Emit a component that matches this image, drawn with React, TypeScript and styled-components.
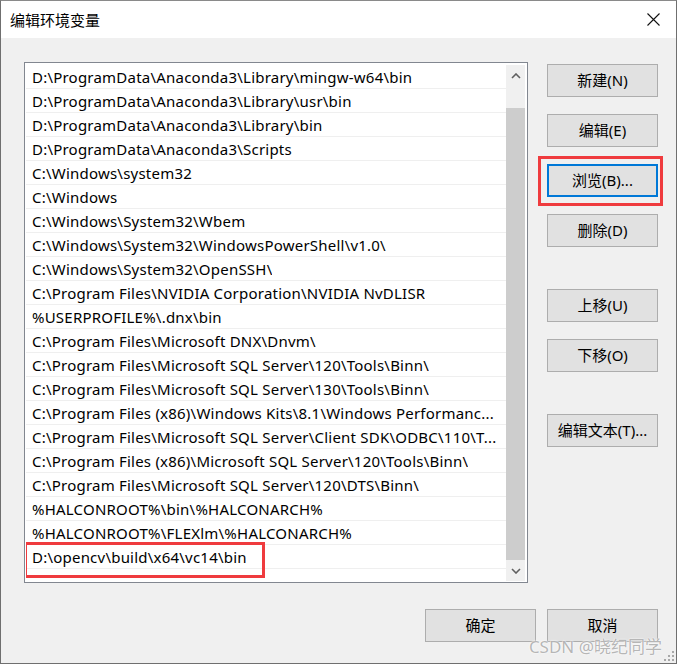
import React from 'react';
import styled, { createGlobalStyle } from 'styled-components';

const GlobalStyle = createGlobalStyle`
  html, body { margin: 0; padding: 0; background: #ffffff; }
  body { font-family: "Noto Sans", "Noto Sans CJK SC", sans-serif; }
`;

const FONT = `"Noto Sans", "Noto Sans CJK SC", sans-serif`;

const Window = styled.div`
  position: relative;
  width: 677px;
  height: 664px;
  box-sizing: border-box;
  border: 1px solid #6f6f6f;
  border-top-color: #8a8a8a;
  background: #f0f0f0;
  display: flex;
  flex-direction: column;
  font-family: ${FONT};
  font-size: 15px;
  color: #000;
  overflow: hidden;
`;

const TitleBar = styled.div`
  height: 37px;
  background: #ffffff;
  display: flex;
  align-items: center;
  justify-content: space-between;
  padding-left: 9px;
  flex-shrink: 0;
`;

const Title = styled.span`
  font-size: 15px;
  line-height: 20px;
`;

const CloseButton = styled.div`
  width: 46px;
  height: 37px;
  display: flex;
  align-items: center;
  justify-content: center;
`;

const Body = styled.div`
  flex: 1;
  display: flex;
  flex-direction: column;
  padding: 24px 18px 0 23px;
`;

const MainRow = styled.div`
  display: flex;
  gap: 19px;
`;

const ListBox = styled.div`
  position: relative;
  width: 504px;
  height: 521px;
  box-sizing: border-box;
  border: 1px solid #828790;
  background: #ffffff;
  padding: 2px 1px 1px 1px;
  display: flex;
`;

const Rows = styled.div`
  flex: 1;
  display: flex;
  flex-direction: column;
  overflow: hidden;
`;

const Row = styled.div`
  position: relative;
  flex-shrink: 0;
  height: 23px;
  border-bottom: 1px solid #efefef;
  padding-left: 6px;
  display: flex;
  align-items: center;
  white-space: nowrap;
  font-size: 15px;
  line-height: 23px;
  letter-spacing: 0.22px;
`;

const RowText = styled.span`
  display: block;
  overflow: hidden;
  max-width: 474px;
  padding-top: 1px;
`;

const RowMark = styled.div`
  position: absolute;
  left: -2px;
  top: -3px;
  width: 241px;
  height: 36px;
  box-sizing: border-box;
  border: 3px solid #ef3b3e;
  pointer-events: none;
`;

const ScrollBar = styled.div`
  width: 19px;
  margin-right: 1px;
  background: #f0f0f0;
  display: flex;
  flex-direction: column;
`;

const ArrowBox = styled.div`
  height: 21px;
  display: flex;
  align-items: center;
  justify-content: center;
  flex-shrink: 0;
`;

const TrackGap = styled.div<{ $h: number }>`
  height: ${(p) => p.$h}px;
  flex-shrink: 0;
`;

const Thumb = styled.div`
  flex: 1;
  background: #cdcdcd;
`;

const ButtonColumn = styled.div`
  width: 111px;
  padding-top: 2px;
  display: flex;
  flex-direction: column;
  gap: 42px;
`;

const ButtonGroup = styled.div`
  display: flex;
  flex-direction: column;
  gap: 17px;
`;

const Button = styled.div<{ $focused?: boolean; $marked?: boolean }>`
  position: relative;
  width: 111px;
  height: 33px;
  box-sizing: border-box;
  background: #e1e1e1;
  border: ${(p) => (p.$focused ? '2px solid #0078d7' : '1px solid #adadad')};
  display: flex;
  align-items: center;
  justify-content: center;
  font-size: 15px;
  line-height: 18px;
  padding-bottom: 1px;
  white-space: nowrap;
  ${(p) =>
    p.$marked
      ? `&::after {
    content: '';
    position: absolute;
    left: -11px;
    top: -10px;
    right: -7px;
    bottom: -11px;
    border: 3px solid #ef3b3e;
  }`
      : ''}
`;

const Footer = styled.div`
  display: flex;
  justify-content: flex-end;
  gap: 11px;
  padding-top: 26px;
`;

const Watermark = styled.div`
  position: absolute;
  right: 14px;
  bottom: 9px;
  font-family: ${FONT};
  font-size: 17px;
  line-height: 15px;
  color: rgba(150, 150, 150, 0.7);
  text-shadow: 0 0 1px #fff, 0 0 2px #fff;
  white-space: nowrap;
`;

const Grip = styled.svg`
  position: absolute;
  right: 1px;
  bottom: 1px;
`;

const paths: string[] = [
  'D:\\ProgramData\\Anaconda3\\Library\\mingw-w64\\bin',
  'D:\\ProgramData\\Anaconda3\\Library\\usr\\bin',
  'D:\\ProgramData\\Anaconda3\\Library\\bin',
  'D:\\ProgramData\\Anaconda3\\Scripts',
  'C:\\Windows\\system32',
  'C:\\Windows',
  'C:\\Windows\\System32\\Wbem',
  'C:\\Windows\\System32\\WindowsPowerShell\\v1.0\\',
  'C:\\Windows\\System32\\OpenSSH\\',
  'C:\\Program Files\\NVIDIA Corporation\\NVIDIA NvDLISR',
  '%USERPROFILE%\\.dnx\\bin',
  'C:\\Program Files\\Microsoft DNX\\Dnvm\\',
  'C:\\Program Files\\Microsoft SQL Server\\120\\Tools\\Binn\\',
  'C:\\Program Files\\Microsoft SQL Server\\130\\Tools\\Binn\\',
  'C:\\Program Files (x86)\\Windows Kits\\8.1\\Windows Performanc...',
  'C:\\Program Files\\Microsoft SQL Server\\Client SDK\\ODBC\\110\\T...',
  'C:\\Program Files (x86)\\Microsoft SQL Server\\120\\Tools\\Binn\\',
  'C:\\Program Files\\Microsoft SQL Server\\120\\DTS\\Binn\\',
  '%HALCONROOT%\\bin\\%HALCONARCH%',
  '%HALCONROOT%\\FLEXlm\\%HALCONARCH%',
  'D:\\opencv\\build\\x64\\vc14\\bin',
  '',
];

const Chevron: React.FC<{ up?: boolean }> = ({ up }) => (
  <svg width="10" height="6" viewBox="0 0 10 6">
    <polyline
      points={up ? '1,5 5,1 9,5' : '1,1 5,5 9,1'}
      fill="none"
      stroke="#606060"
      strokeWidth="1.6"
    />
  </svg>
);

export default function App() {
  return (
    <>
      <GlobalStyle />
      <Window>
        <TitleBar>
          <Title>编辑环境变量</Title>
          <CloseButton>
            <svg width="13" height="13" viewBox="0 0 13 13">
              <path d="M0.5 0.5 L12.5 12.5 M12.5 0.5 L0.5 12.5" stroke="#111" strokeWidth="1.1" />
            </svg>
          </CloseButton>
        </TitleBar>
        <Body>
          <MainRow>
            <ListBox>
              <Rows>
                {paths.map((p, i) => (
                  <Row key={i}>
                    <RowText>{p}</RowText>
                    {p.startsWith('D:\\opencv') && <RowMark />}
                  </Row>
                ))}
              </Rows>
              <ScrollBar>
                <ArrowBox>
                  <Chevron up />
                </ArrowBox>
                <TrackGap $h={22} />
                <Thumb />
                <ArrowBox>
                  <Chevron />
                </ArrowBox>
              </ScrollBar>
            </ListBox>
            <ButtonColumn>
              <ButtonGroup>
                <Button>新建(N)</Button>
                <Button>编辑(E)</Button>
                <Button $focused $marked>浏览(B)...</Button>
                <Button>删除(D)</Button>
              </ButtonGroup>
              <ButtonGroup>
                <Button>上移(U)</Button>
                <Button>下移(O)</Button>
              </ButtonGroup>
              <ButtonGroup>
                <Button>编辑文本(T)...</Button>
              </ButtonGroup>
            </ButtonColumn>
          </MainRow>
          <Footer>
            <Button>确定</Button>
            <Button>取消</Button>
          </Footer>
        </Body>
        <Watermark>CSDN @晓纪同学</Watermark>
        <Grip width="12" height="12" viewBox="0 0 12 12">
          {[
            [10, 2], [10, 6], [10, 10], [6, 6], [6, 10], [2, 10],
          ].map(([x, y], i) => (
            <rect key={i} x={x - 1} y={y - 1} width="2" height="2" fill="#a8a8a8" />
          ))}
        </Grip>
      </Window>
    </>
  );
}
